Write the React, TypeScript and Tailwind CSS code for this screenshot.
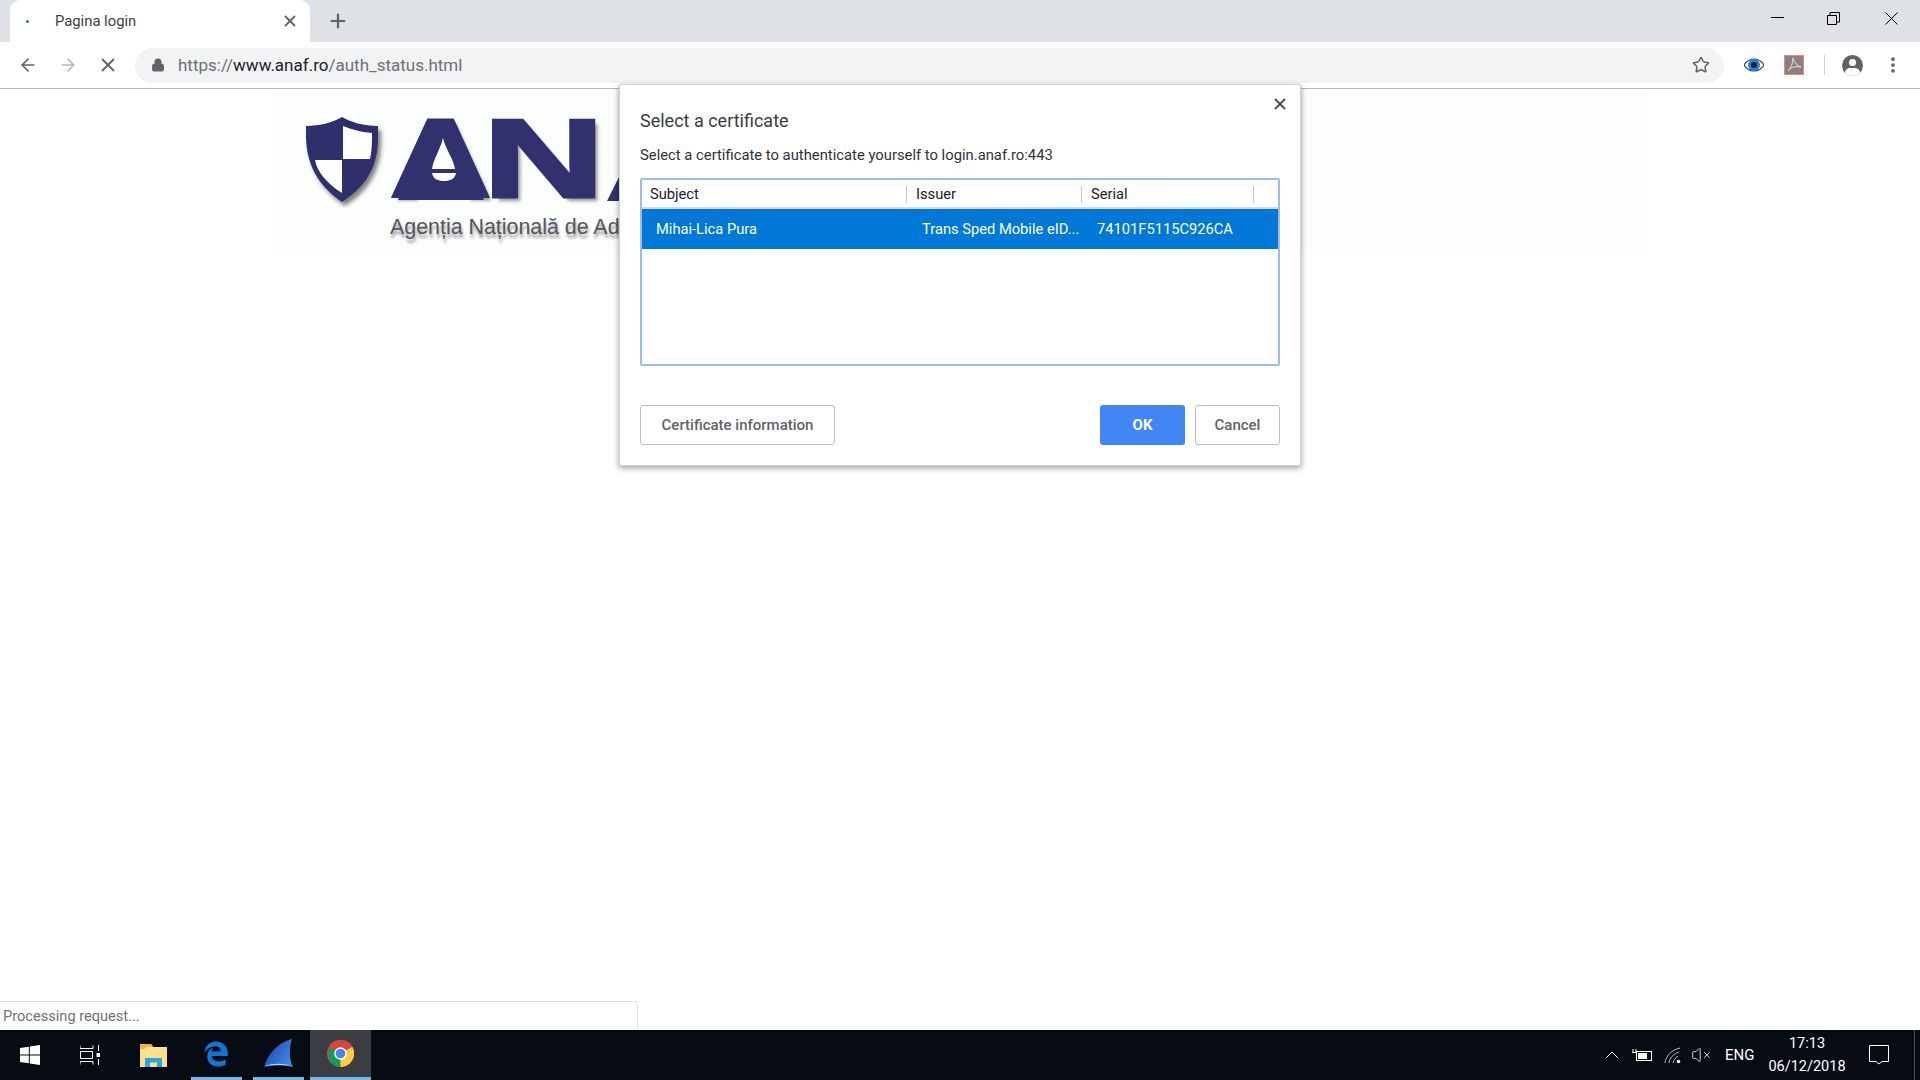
import { ArrowLeft, ArrowRight, X, Plus, Lock, Star, EllipsisVertical, ChevronUp, VolumeX } from "lucide-react";
import { FaEdgeLegacy } from "react-icons/fa";

const Shield = () => (
  <svg width="72" height="85" viewBox="0 0 72 85" className="shrink-0 drop-shadow-[3px_4px_2px_rgba(0,0,0,0.5)]">
    <path d="M36 0 C44 5 58 9 72 9 C73 35 71 62 36 85 C3 62 -1 35 0 9 C14 9 28 5 36 0 Z" fill="#2f2f6b" />
    <path d="M37 9 C44 12 55 15 66 16 C66 26 66 33 64 42 L37 42 Z" fill="#fff" />
    <path d="M9 43 L36 43 L36 76 C20 66 11 54 9 43 Z" fill="#fff" />
  </svg>
);

// solid centre of the big A with the bell cut out
const BellMark = () => (
  <svg width="90" height="81" viewBox="0 0 90 81" className="absolute left-[6px] top-[2px]">
    <path d="M45 0 L88 81 H2 Z" fill="#32316f" />
    <path d="M47 19 C49 29 58 41 59 50 H36 C37 41 45 29 47 19 Z" fill="#fff" />
    <path d="M36 54 H60 C59 60 54 62 48 62 C42 62 37 60 36 54 Z" fill="#fff" />
  </svg>
);

const letterClass =
  "inline-block origin-top-left font-['Liberation_Sans',sans-serif] font-bold text-[112px] leading-[84px] text-[#32316f] [-webkit-text-stroke:3px_#32316f] [text-shadow:3px_4px_3px_rgba(0,0,0,0.4)]";

const Logo = () => (
  <div className="ml-[272px] w-[1376px] h-[163px] bg-[#fcfefb] pl-[34px] pt-[28px] flex gap-3">
    <Shield />
    <div className="flex flex-col">
      <div className="flex h-[84px]">
        <div className="relative w-[105px] shrink-0">
          <span className={`${letterClass} scale-x-[1.25]`}>A</span>
          <BellMark />
        </div>
        <div className="w-[112px] -ml-[12px] shrink-0">
          <span className={`${letterClass} scale-x-[1.5]`}>N</span>
        </div>
        {/* the rest of the word sits under the dialog */}
        <svg width="14" height="84" viewBox="0 0 14 84" className="ml-[12px] shrink-0">
          <path d="M0 84 L14 56 V84 Z" fill="#32316f" />
        </svg>
      </div>
      <div className="mt-[14px] font-['Liberation_Sans',sans-serif] text-[21.4px] leading-[24px] text-[#55555f] whitespace-nowrap [text-shadow:1px_4px_3px_rgba(0,0,0,0.4)]">
        Agenția Națională de Ad
      </div>
    </div>
  </div>
);

const ChromeIcon = () => (
  <svg width="27" height="27" viewBox="0 0 48 48">
    <circle cx="24" cy="24" r="24" fill="#db4437" />
    <path d="M3.2 12 L24 24 L24 48 A24 24 0 0 1 3.2 36 Z" fill="#0f9d58" />
    <path d="M24 24 L45 12 A24 24 0 0 1 24 48 Z" fill="#ffcd40" />
    <path d="M3.2 12 A24 24 0 0 1 45 12 L24 12 A12 12 0 0 0 13.6 18 Z" fill="#db4437" />
    <circle cx="24" cy="24" r="11" fill="#fff" />
    <circle cx="24" cy="24" r="8.6" fill="#4285f4" />
  </svg>
);

const Taskbar = () => (
  <div className="h-[50px] bg-[#070b12] flex items-stretch text-white shrink-0">
    <div className="w-[60px] flex items-center justify-center">
      <svg width="20" height="20" viewBox="0 0 20 20" fill="#fff">
        <path d="M0 3 L8.8 1.7 V9.4 H0 Z M9.8 1.5 L20 0 V9.4 H9.8 Z M0 10.5 H8.8 V18.3 L0 17 Z M9.8 10.5 H20 V20 L9.8 18.5 Z" />
      </svg>
    </div>
    <div className="w-[60px] flex items-center justify-center">
      <svg width="20" height="20" viewBox="0 0 20 20" fill="none" stroke="#fff" strokeWidth="1">
        <path d="M0 0.5 V3.5 H13 V0.5 M0.5 6.5 H12.5 V13.5 H0.5 Z M0 19.5 V16.5 H13 V19.5 M18.5 0 V6 M18.5 14 V20" />
        <rect x="16.5" y="8" width="4" height="4" fill="#fff" stroke="none" />
      </svg>
    </div>
    <div className="w-[71px] flex items-center justify-center pr-[4px]">
      <svg width="27" height="24" viewBox="0 0 27 24">
        <path d="M0 1 H11 L13 4 H27 V24 H0 Z" fill="#fbe08a" />
        <path d="M0 1 H11 L13 4 H5 V6 H0 Z" fill="#e8b73f" />
        <path d="M5 15 H22 V24 H17 V19.5 H10 V24 H5 Z" fill="#2ba5e8" />
      </svg>
    </div>
    <div className="w-[51px] mr-[11px] flex items-center justify-center border-b-[3px] border-[#76b9ed] pr-[1px]">
      <FaEdgeLegacy size={26} color="#0d78d6" />
    </div>
    <div className="w-[51px] mr-[6px] flex items-center justify-center border-b-[3px] border-[#76b9ed]">
      <svg width="29" height="29" viewBox="0 0 29 29">
        <defs>
          <linearGradient id="fin" x1="0" y1="0" x2="1" y2="0.6">
            <stop offset="0" stopColor="#123fb0" />
            <stop offset="1" stopColor="#3f86e0" />
          </linearGradient>
        </defs>
        <path d="M28 0 C15 3 4 14 0 28 C9 26 20 26 29 28 C25 20 25 9 28 0 Z" fill="url(#fin)" />
        <path d="M1 27 C9 24 19 24 28 27 C20 25.5 9 26 1 27 Z" fill="#bcd8f5" />
      </svg>
    </div>
    <div className="w-[61px] bg-[#3a3d42] flex items-center justify-center border-b-[3px] border-[#76b9ed]">
      <ChromeIcon />
    </div>
    <div className="flex-1" />
    <div className="flex items-center">
      <ChevronUp size={24} strokeWidth={1} className="mr-[8px]" />
      <svg width="20" height="14" viewBox="0 0 20 14" fill="none" stroke="#fff" className="mr-[12px]">
        <rect x="4.5" y="3.5" width="15" height="9" />
        <rect x="6" y="5" width="9" height="6" fill="#fff" stroke="none" />
        <path d="M1 1 V4 M4 1 V4 M0 4.5 H5" />
      </svg>
      <svg width="18" height="17" viewBox="0 0 18 17" fill="none" stroke="#bbb" strokeWidth="1" className="mr-[9px]">
        <path d="M1 16 C2 9 7 3 16 1 M5 16 C6 11 9 7 15 5 M9 16 C9.5 14 11 11 14 9" />
        <circle cx="14.5" cy="14.5" r="1.8" fill="#fff" stroke="none" />
      </svg>
      <VolumeX size={20} strokeWidth={1} className="mr-[14px]" />
      <span className="text-[15px] w-[29px] mr-[14px]">ENG</span>
      <div className="w-[78px] text-center text-[14.5px] leading-[23px]">
        <div>17:13</div>
        <div>06/12/2018</div>
      </div>
      <svg width="20" height="20" viewBox="0 0 20 20" fill="none" stroke="#fff" className="ml-[23px] mr-[25px]">
        <path d="M0.5 0.5 H19.5 V16.5 H13 L10 19 L7 16.5 H0.5 Z" />
      </svg>
      <div className="w-px h-[50px] bg-[#4a4d52] mr-[5px]" />
    </div>
  </div>
);

const Dialog = () => (
  <div className="absolute left-[619px] top-[84px] w-[682px] h-[382px] bg-white rounded-[2px] border border-[#d0d0d0] shadow-[0_2px_6px_rgba(0,0,0,0.4)] px-[20px] pt-[24px] text-[#202124]">
    <X size={18} strokeWidth={2.4} className="absolute right-[11px] top-[10px] text-[#4a4d52]" />
    <div className="text-[18px] leading-[24px] text-[#3a3d40]">Select a certificate</div>
    <div className="mt-[12px] text-[14.8px] leading-[20px] text-[#303336]">
      Select a certificate to authenticate yourself to login.anaf.ro:443
    </div>
    <div className="mt-[13px] h-[188px] rounded-[2px] border-2 border-[#9dbcee] flex flex-col">
      <div className="h-[29px] flex border-b-2 border-[#d8d8d8] text-[14.7px] text-[#202124]">
        <div className="w-[265px] pl-[8px] border-r border-[#c8c8c8] mt-[6px] mb-[4px] flex items-center">Subject</div>
        <div className="w-[175px] pl-[9px] border-r border-[#c8c8c8] mt-[6px] mb-[4px] flex items-center">Issuer</div>
        <div className="w-[172px] pl-[9px] border-r border-[#c8c8c8] mt-[6px] mb-[4px] flex items-center">Serial</div>
      </div>
      <div className="h-[40px] bg-[#0078d7] text-white text-[14.7px] flex items-center">
        <div className="w-[265px] pl-[14px]">Mihai-Lica Pura</div>
        <div className="w-[175px] pl-[15px] whitespace-nowrap overflow-hidden">Trans Sped Mobile eID...</div>
        <div className="w-[172px] pl-[15px]">74101F5115C926CA</div>
      </div>
    </div>
    <div className="mt-[39px] flex text-[15px] font-medium">
      <div className="w-[195px] h-[40px] border border-[#bdbdbd] rounded-[3px] flex items-center justify-center text-[#5f6368]">
        Certificate information
      </div>
      <div className="flex-1" />
      <div className="w-[85px] h-[40px] rounded-[3px] bg-[#4285f4] text-white font-bold flex items-center justify-center">OK</div>
      <div className="ml-[10px] w-[85px] h-[40px] border border-[#bdbdbd] rounded-[3px] flex items-center justify-center text-[#5f6368]">
        Cancel
      </div>
    </div>
  </div>
);

export default function App() {
  return (
    <div className="relative w-[1920px] h-[1080px] overflow-hidden bg-white flex flex-col font-['Roboto',sans-serif]">
      {/* Tab strip */}
      <div className="h-[42px] bg-[#dee1e6] flex shrink-0">
        <div className="ml-[10px] w-[300px] h-[42px] bg-white rounded-t-[10px] flex items-center text-[14.8px] text-[#3c4043]">
          <span className="ml-[16px] w-[3px] h-[3px] rounded-full bg-[#1a73e8]" />
          <span className="ml-[26px] flex-1">Pagina login</span>
          <X size={18} strokeWidth={2.4} className="mr-[11px] text-[#5f6368]" />
        </div>
        <div className="ml-[17px] flex items-center text-[#5f6368]">
          <Plus size={22} strokeWidth={2.4} />
        </div>
        <div className="flex-1" />
        <div className="flex items-start pt-[12px] text-black">
          <div className="w-[13px] h-px bg-black mt-[5px]" />
          <svg width="13" height="13" viewBox="0 0 13 13" fill="none" stroke="#000" className="ml-[43px]">
            <path d="M0.5 3.5 H9.5 V12.5 H0.5 Z M3 3 V0.5 H12.5 V10 H10" />
          </svg>
          <svg width="13" height="13" viewBox="0 0 13 13" fill="none" stroke="#000" className="ml-[45px] mr-[22px]">
            <path d="M0.5 0.5 L12.5 12.5 M12.5 0.5 L0.5 12.5" />
          </svg>
        </div>
      </div>

      {/* Toolbar */}
      <div className="h-[47px] bg-white border-b border-[#b8b8b8] flex items-center shrink-0">
        <ArrowLeft size={20} strokeWidth={2} className="ml-[18px] text-[#5f6368]" />
        <ArrowRight size={20} strokeWidth={2} className="ml-[20px] text-[#b7b9bc]" />
        <X size={22} strokeWidth={2} className="ml-[19px] text-[#5f6368]" />
        <div className="ml-[16px] w-[1589px] h-[35px] rounded-full bg-[#f1f3f4] flex items-center text-[17px]">
          <Lock size={14} fill="#5f6368" className="ml-[16px] text-[#5f6368]" />
          <div className="ml-[13px] pt-[1px] text-[#6c7075]">
            https://<span className="text-[#202124]">www.anaf.ro</span>/auth_status.html
          </div>
          <div className="flex-1" />
          <Star size={18} strokeWidth={2} className="mr-[14px] text-[#5f6368]" />
        </div>
        <svg width="20" height="14" viewBox="0 0 20 14" className="ml-[20px]">
          <path d="M0 7 C5 -1 15 -1 20 7 C15 15 5 15 0 7 Z" fill="#fff" stroke="#1c3f7a" strokeWidth="1.2" />
          <circle cx="10" cy="7" r="6" fill="#1b87d6" />
          <circle cx="10" cy="7" r="3" fill="#0b1a30" />
        </svg>
        <div className="ml-[20px] w-[20px] h-[20px] bg-[#8a8080] border border-[#f08878] flex items-center justify-center">
          <svg width="16" height="16" viewBox="0 0 16 16" fill="none" stroke="#e8e2e2" strokeWidth="1">
            <path d="M7 1 C9 6 11 9 15 10 C10 9 5 10 2 14 C5 11 7 6 7 1 Z" />
          </svg>
        </div>
        <div className="ml-[20px] w-px h-[20px] bg-[#cfcfcf]" />
        <div className="relative ml-[17px] w-[21px] h-[21px] rounded-full bg-[#5f6368] overflow-hidden">
          <div className="absolute left-[7px] top-[4px] w-[7px] h-[7px] rounded-full bg-white" />
          <div className="absolute left-[3px] top-[13px] w-[15px] h-[10px] rounded-full bg-white" />
        </div>
        <EllipsisVertical size={20} strokeWidth={2.5} className="ml-[20px] text-[#5f6368]" />
      </div>

      {/* Page */}
      <div className="flex-1 overflow-hidden">
        <Logo />
      </div>

      <Taskbar />

      <Dialog />

      {/* Status bubble */}
      <div className="absolute left-0 bottom-[50px] w-[638px] h-[29px] bg-white border-t border-r border-[#e3e3e3] rounded-tr-[4px] pl-[3px] pt-[2px] flex items-center text-[14.6px] text-[#6f7276]">
        Processing request...
      </div>
    </div>
  );
}
